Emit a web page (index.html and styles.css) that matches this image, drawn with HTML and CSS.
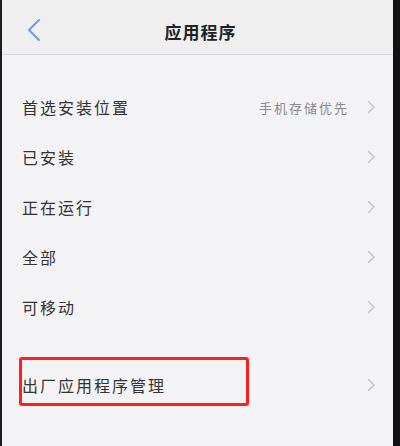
FILE: index.html
```html
<!DOCTYPE html>
<html lang="zh">
<head>
<meta charset="utf-8">
<link rel="stylesheet" href="styles.css">
</head>
<body>
<div class="frame">
  <div class="screen">
    <header class="topbar">
      <svg class="back" width="14" height="22" viewBox="0 0 14 22"><polyline points="12,1 2,11 12,21" fill="none" stroke="#6d9de4" stroke-width="2" stroke-linecap="round" stroke-linejoin="round"/></svg>
      <h1 class="title">应用程序</h1>
    </header>
    <div class="list first">
      <div class="row"><span class="label">首选安装位置</span><span class="value">手机存储优先</span><svg class="chev" width="9" height="14" viewBox="0 0 9 14"><polyline points="1.5,1.5 7,7 1.5,12.5" fill="none" stroke="#c6c6c8" stroke-width="1.5" stroke-linecap="round" stroke-linejoin="round"/></svg></div>
      <div class="row"><span class="label">已安装</span><svg class="chev" width="9" height="14" viewBox="0 0 9 14"><polyline points="1.5,1.5 7,7 1.5,12.5" fill="none" stroke="#c6c6c8" stroke-width="1.5" stroke-linecap="round" stroke-linejoin="round"/></svg></div>
      <div class="row"><span class="label">正在运行</span><svg class="chev" width="9" height="14" viewBox="0 0 9 14"><polyline points="1.5,1.5 7,7 1.5,12.5" fill="none" stroke="#c6c6c8" stroke-width="1.5" stroke-linecap="round" stroke-linejoin="round"/></svg></div>
      <div class="row"><span class="label">全部</span><svg class="chev" width="9" height="14" viewBox="0 0 9 14"><polyline points="1.5,1.5 7,7 1.5,12.5" fill="none" stroke="#c6c6c8" stroke-width="1.5" stroke-linecap="round" stroke-linejoin="round"/></svg></div>
      <div class="row"><span class="label">可移动</span><svg class="chev" width="9" height="14" viewBox="0 0 9 14"><polyline points="1.5,1.5 7,7 1.5,12.5" fill="none" stroke="#c6c6c8" stroke-width="1.5" stroke-linecap="round" stroke-linejoin="round"/></svg></div>
    </div>
    <div class="list second">
      <div class="row marked"><span class="label">出厂应用程序管理</span><svg class="chev" width="9" height="14" viewBox="0 0 9 14"><polyline points="1.5,1.5 7,7 1.5,12.5" fill="none" stroke="#c6c6c8" stroke-width="1.5" stroke-linecap="round" stroke-linejoin="round"/></svg><div class="highlight"></div></div>
    </div>
  </div>
</div>
</body>
</html>
```
FILE: styles.css
```css
html, body {
  margin: 0;
  padding: 0;
  background: #111;
}
body {
  width: 400px;
  height: 446px;
  overflow: hidden;
  font-family: "Noto Sans CJK SC", "Noto Sans", sans-serif;
}
.frame {
  display: flex;
  height: 446px;
  border-left: 2px solid #1c1c1e;
  border-right: 7px solid #121214;
  box-sizing: border-box;
}
.screen {
  flex: 1;
  background: #f3f3f5;
  display: flex;
  flex-direction: column;
}
.topbar {
  position: relative;
  height: 54px;
  background: #efeff0;
  border-bottom: 1px solid #d9d9db;
  display: flex;
  align-items: center;
  justify-content: center;
}
.back {
  position: absolute;
  left: 25px;
  top: 19px;
}
.title {
  margin: 0;
  font-size: 17px;
  font-weight: 700;
  letter-spacing: 1px;
  color: #222;
  padding-top: 8px;
  padding-left: 6px;
}
.list.first {
  margin-top: 27px;
}
.list.second {
  margin-top: 28px;
}
.row {
  position: relative;
  height: 50px;
  display: flex;
  align-items: center;
  padding-left: 20px;
  padding-right: 17px;
}
.label {
  flex: 1;
  font-size: 16px;
  letter-spacing: 2px;
  color: #333;
}
.value {
  font-size: 13px;
  letter-spacing: 2px;
  color: #8a8a8c;
  margin-right: 18px;
}
.chev {
  display: block;
}
.highlight {
  position: absolute;
  left: 17px;
  top: -3px;
  width: 230px;
  height: 49px;
  border: 3px solid #ff1f1f;
  border-radius: 3px;
  box-sizing: border-box;
}
```
